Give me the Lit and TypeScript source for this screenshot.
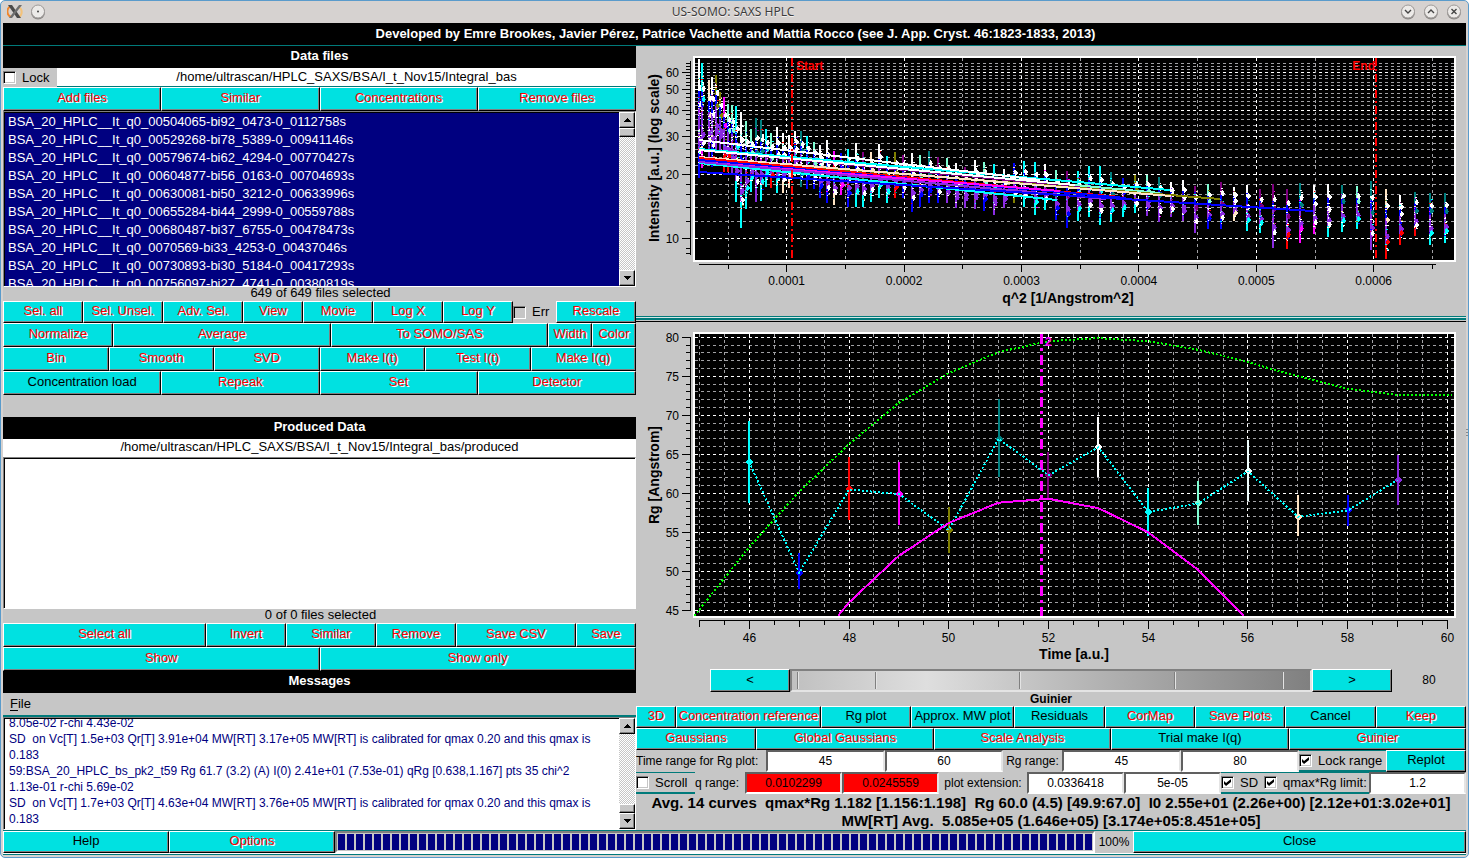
import { LitElement, html, svg, css } from "lit";
import { customElement, property } from "lit/decorators.js";
import { styleMap } from "lit/directives/style-map.js";
import { classMap } from "lit/directives/class-map.js";

type Btn = { label: string; w: number; on?: boolean };

const b = (label: string, w = 1, on = false): Btn => ({ label, w, on });

const palette = [
  "#00ffff", "#0000ff", "#ff0000", "#ff00ff", "#808000", "#008080", "#800080",
  "#ffffff", "#00ffff", "#7fffd4", "#f0ffff", "#ffe4c4", "#0000ff", "#8a2be2",
];

const plotStyles = css`
  :host { display: block; min-height: 0; min-width: 0; }
  svg { display: block; width: 100%; height: 100%; }
  text { font-family: "Liberation Sans", Arial, sans-serif; }
  .tick { font-size: 12px; fill: #000; }
  .title { font-size: 14px; font-weight: bold; fill: #000; }
  .mark { font-size: 12px; font-weight: bold; }
  .frame { fill: #000; stroke: #fff; stroke-width: 2; }
  .axis { stroke: #000; stroke-width: 1; fill: none; }
  .minor { stroke: #a0a0a4; stroke-width: 1; stroke-dasharray: 3 3; }
  .major { stroke: #fff; stroke-width: 1; stroke-dasharray: 3 3; }
`;

/* Error bars of the intensity plot: [channel, top, bottom] in thirds of a unit. */
const bars: number[][] = [
  [0, 28, 384], [1, 40, 355], [3, 90, 325], [4, 82, 350], [5, 75, 300], [6, 125, 300],
  [7, 142, 365], [8, 162, 365], [9, 165, 375], [10, 168, 455], [11, 186, 533], [12, 213, 478],
  [13, 238, 425], [14, 204, 455], [15, 210, 452], [16, 236, 410], [17, 250, 415], [18, 232, 430],
  [19, 250, 430], [20, 255, 415], [21, 243, 378], [22, 243, 410], [23, 258, 416], [24, 275, 416],
  [25, 285, 445], [26, 270, 458], [27, 303, 466], [28, 310, 435], [29, 297, 470], [30, 280, 470],
  [31, 305, 470], [32, 306, 455], [33, 282, 443], [34, 318, 458], [35, 306, 445], [36, 315, 443],
  [37, 310, 485], [38, 315, 470], [39, 303, 458], [40, 322, 458], [41, 323, 458], [42, 338, 475],
  [43, 350, 475], [44, 330, 478], [45, 336, 482], [46, 343, 494], [47, 358, 475], [48, 340, 458],
  [49, 333, 470], [50, 336, 494], [51, 342, 480], [52, 360, 510], [53, 362, 533], [54, 362, 512],
  [55, 348, 502], [56, 348, 524], [57, 366, 517], [58, 384, 500], [59, 376, 488], [60, 375, 497],
  [61, 381, 517], [62, 396, 502], [63, 390, 512], [64, 408, 548], [65, 402, 538], [66, 396, 537],
  [67, 411, 514], [68, 405, 543], [69, 417, 550], [70, 402, 593], [71, 417, 597], [72, 400, 578],
  [73, 405, 553], [74, 402, 562], [75, 405, 545], [76, 408, 538], [77, 393, 600], [78, 417, 627],
  [79, 436, 584], [80, 426, 557], [81, 430, 586], [82, 430, 578],
];

/* Colours of the top and bottom piece of each bar, in the order of the bars. */
const tops = "wcnwoomaacwaattcawwwwtcawwmbcwpnwcopwatpawpwacwbccwapccctboatwwpapwwppptwwtatnwttt".split("");
const feet = "bmvbvvrrvccccvccrcnnntbbbbnmbcccccrbbbbbvvvvbvvocccbbccccccvvvvvbbnccvrmmcccvrrrccbpcc".split("");
const ink: Record<string, string> = {
  w: "#ffffff", c: "#00ffff", b: "#0000ff", o: "#808000", m: "#ff00ff", a: "#7fffd4",
  t: "#008080", p: "#800080", v: "#8a2be2", r: "#ff0000", n: "#ffe4c4",
};

/* Guinier fit lines: x1, y1, x2, y2, colour. */
const fits: [number, number, number, number, string][] = [
  [63, 104, 389, 134, "#008080"], [63, 104, 464, 143, "#800080"], [63, 103, 534, 144, "#00ffff"],
  [63, 104, 524, 147, "#7fffd4"], [63, 94, 404, 134, "#ffffff"], [63, 104, 439, 139, "#ffffff"],
  [63, 112, 584, 153, "#808000"], [63, 111, 535, 150, "#ffe4c4"], [63, 112, 484, 151, "#ff0000"],
  [63, 114, 490, 152, "#0000ff"], [63, 117, 421, 154, "#00ffff"], [63, 116, 424, 145, "#ff00ff"],
  [63, 116, 470, 153, "#8a2be2"], [63, 126, 677, 165, "#0000ff"],
];

@customElement("intensity-plot")
class IntensityPlot extends LitElement {
  static styles = [
    plotStyles,
    css`
      .limit { stroke: #f00; stroke-width: 2; stroke-dasharray: 8 3 2 3; }
      .mark { fill: #f00; }
    `,
  ];

  x(v: number) { return 33.3 + v * 117.4; }
  y(v: number) { return Math.round(192 - 213.3 * Math.log10(v / 10)) + 0.5; }

  renderBar([k, top, bottom]: number[], i: number) {
    const q = 0.00504065 + k * 0.000252035;
    const x = Math.round(this.x(q * q * 10000)) - 1;
    const t = 4 + top / 3;
    const h = (bottom - top) / 3;
    let seed = (i + 3) * 7919;
    const rnd = () => ((seed = (seed * 1103515245 + 12345) % 2147483648) / 2147483648);
    const specks = [];
    const n = Math.round(h / 2.4);
    for (let j = 0; j < n; j++) {
      const sy = Math.round(t + h * 0.1 + rnd() * h * 0.78);
      const col = rnd() < 0.35 ? "#ffffff" : palette[Math.floor(rnd() * palette.length)];
      specks.push(svg`<rect x=${x + 2 - Math.floor(rnd() * 3)} y=${sy} width=${1 + Math.floor(rnd() * 2)} height="1" fill=${col}></rect>`);
    }
    const diamond = (dy: number, c: string) =>
      svg`<path d=${`M${x + 1} ${dy}l1 -3h1l2 3l-2 3h-1z`} fill=${c}></path>`;
    return svg`
      <rect x=${x} y=${t} width="2" height=${h} fill="#8a2be2"></rect>
      <rect x=${x} y=${t + h * 0.25} width="2" height=${h * 0.16} fill="#0000ff"></rect>
      <rect x=${x} y=${t} width="2" height=${h * 0.27} fill=${ink[tops[i] ?? "w"]}></rect>
      <rect x=${x} y=${t + h * 0.78} width="2" height=${h * 0.22} fill=${ink[feet[i] ?? "c"]}></rect>
      ${specks}
      ${diamond(t + h * 0.24, "#ffffff")}
      ${diamond(t + h * (0.34 + rnd() * 0.14), ink[tops[i] ?? "w"])}
      ${diamond(t + h * 0.68, "#8a2be2")}
      ${diamond(t + h * 0.76, rnd() < 0.4 ? "#ffffff" : ink[feet[i] ?? "c"])}
    `;
  }

  render() {
    const rows: number[] = [];
    for (let v = 10; v <= 66; v += 2) rows.push(v);
    const cols = [0.5, 1, 1.5, 2, 2.5, 3, 3.5, 4, 4.5, 5, 5.5, 6, 6.5];
    return html`
      <svg viewBox="0 0 830 270" role="img" aria-label="Intensity against q squared" shape-rendering="crispEdges">
        <rect class="frame" x="58" y="11" width="761" height="204"></rect>
        ${rows.map((v) => svg`<line class=${v % 10 ? "minor" : "major"} x1="59" x2="818" y1=${this.y(v)} y2=${this.y(v)}></line>
          <line class="axis" x1=${v % 10 ? 50 : 46} x2="54" y1=${this.y(v)} y2=${this.y(v)}></line>`)}
        ${[8.5, 9].map((v) => svg`<line class="axis" x1="50" x2="54" y1=${this.y(v)} y2=${this.y(v)}></line>`)}
        ${cols.map((v) => {
          const x = Math.floor(this.x(v)) + 0.5;
          const whole = Number.isInteger(v);
          return svg`<line class=${whole ? "major" : "minor"} x1=${x} x2=${x} y1="12" y2="214"></line>
            <line class="axis" x1=${x} x2=${x} y1="218" y2=${whole ? 226 : 223}></line>`;
        })}
        <path class="axis" d="M54.5 15V209M63 218.5H800"></path>
        ${[10, 20, 30, 40, 50, 60].map((v) => svg`<text class="tick" x="43" y=${this.y(v) + 4} text-anchor="end">${v}</text>`)}
        ${[1, 2, 3, 4, 5, 6].map((v) => svg`<text class="tick" x=${this.x(v)} y="239" text-anchor="middle">0.000${v}</text>`)}
        ${bars.map((d, i) => this.renderBar(d, i))}
        ${fits.map(([x1, y1, x2, y2, c]) => svg`<line x1=${x1} y1=${y1} x2=${x2} y2=${y2} stroke=${c} stroke-width="2"></line>`)}
        <line class="limit" x1="156" x2="156" y1="12" y2="214"></line>
        <line class="limit" x1="740" x2="740" y1="12" y2="214"></line>
        <text class="mark" x="160" y="24">Start</text>
        <text class="mark" x="739" y="24" text-anchor="end">End</text>
        <text class="title" x="432" y="257" text-anchor="middle">q^2 [1/Angstrom^2]</text>
        <text class="title" transform="translate(23 112) rotate(-90)" text-anchor="middle">Intensity [a.u.] (log scale)</text>
      </svg>
    `;
  }
}

const rg: [number, number, number, number][] = [
  [46, 64.0, 58.7, 69.3], [47, 49.8, 47.7, 52.3], [48, 60.5, 56.6, 64.7], [49, 59.9, 55.9, 64.0],
  [50, 55.3, 52.4, 58.3], [51, 67.0, 62.1, 72.1], [52, 62.3, 59.3, 65.3], [53, 65.9, 62.1, 69.8],
  [54, 57.6, 54.5, 60.7], [55, 58.7, 55.9, 61.6], [56, 62.8, 59.0, 66.8], [57, 57.0, 54.5, 59.8],
  [58, 57.8, 55.8, 59.8], [59, 61.7, 58.5, 64.9],
];
const total = [
  [44.9, 44.3], [46, 53.1], [47, 60.2], [48, 66.3], [49, 71.6], [50, 75.4], [51, 78.1], [52, 79.5],
  [53, 79.9], [54, 79.5], [55, 78.4], [56, 76.8], [57, 75], [58, 73.4], [59, 72.6], [60.1, 72.6],
];
const peak = [
  [47.78, 44.3], [48, 46], [49, 52], [50, 56.2], [51, 58.8], [52, 59.3], [53, 58.1], [54, 55],
  [55, 50.2], [55.92, 44.3],
];

@customElement("rg-plot")
class RgPlot extends LitElement {
  static styles = [
    plotStyles,
    css`
      .total { fill: none; stroke: #0f0; stroke-width: 2; stroke-dasharray: 2 2; }
      .peak { fill: none; stroke: #f0f; stroke-width: 2; }
      .rg { fill: none; stroke: #0ff; stroke-width: 2; stroke-dasharray: 2 2; }
      .cursor { stroke: #f0f; stroke-width: 3; stroke-dasharray: 10 4 3 4; }
      .mark { fill: #f0f; }
    `,
  ];

  x(t: number) { return 63.4 + (t - 45) * 49.87; }
  y(v: number) { return 15.3 + (80 - v) * 7.8; }

  line(p: number[][]) {
    return p.map(([t, v]) => `${this.x(t)},${this.y(v)}`).join(" ");
  }

  render() {
    const rows = Array.from({ length: 36 }, (_, i) => 45 + i);
    const cols = Array.from({ length: 31 }, (_, i) => 45 + i / 2);
    return html`
      <svg viewBox="0 0 830 342" role="img" aria-label="Rg against time" shape-rendering="crispEdges">
        <rect class="frame" x="58" y="11" width="761" height="284"></rect>
        ${rows.map((v) => {
          const y = Math.floor(this.y(v)) + 0.5;
          const five = v % 5 === 0;
          return svg`<line class=${five ? "major" : "minor"} x1="59" x2="818" y1=${y} y2=${y}></line>
            <line class="axis" x1=${five ? 46 : 50} x2="54" y1=${y} y2=${y}></line>
            ${five ? svg`<text class="tick" x="43" y=${y + 4} text-anchor="end">${v}</text>` : ""}`;
        })}
        ${cols.map((t) => {
          const x = Math.floor(this.x(t)) + 0.5;
          const even = t % 2 === 0;
          return svg`<line class=${even ? "major" : "minor"} x1=${x} x2=${x} y1="12" y2="294"></line>
            <line class="axis" x1=${x} x2=${x} y1="298" y2=${even ? 307 : Number.isInteger(t) ? 305 : 303}></line>
            ${even ? svg`<text class="tick" x=${x} y="320" text-anchor="middle">${t}</text>` : ""}`;
        })}
        <path class="axis" d="M54.5 15V289M63 298.5H812"></path>
        <polyline class="total" points=${this.line(total)}></polyline>
        <line class="cursor" x1="405" x2="405" y1="12" y2="294"></line>
        ${rg.map(([t, v, lo, hi], i) => {
          const x = Math.round(this.x(t));
          const y = Math.round(this.y(v));
          return svg`<rect x=${x - 1} y=${this.y(hi)} width="2" height=${this.y(lo) - this.y(hi)} fill=${palette[i]}></rect>
            <path d=${`M${x - 4} ${y}l4 -4l4 4l-4 4z`} fill=${palette[i]}></path>`;
        })}
        <polyline class="rg" points=${this.line(rg)}></polyline>
        <polyline class="peak" points=${this.line(peak)}></polyline>
        <text class="mark" x="409" y="24">2</text>
        <text class="title" x="438" y="337" text-anchor="middle">Time [a.u.]</text>
        <text class="title" transform="translate(23 153) rotate(-90)" text-anchor="middle">Rg [Angstrom]</text>
      </svg>
    `;
  }
}

@customElement("scroll-strip")
class ScrollStrip extends LitElement {
  @property({ type: Boolean }) end = false;
  static styles = css`
    :host {
      display: flex; flex-direction: column; width: 16px; flex: none;
      background: repeating-conic-gradient(#fff 0 25%, #c6c6c6 0 50%) 0 0 / 2px 2px;
    }
    .arrow, .thumb {
      box-sizing: border-box; background: #c6c6c6; border: 1px solid; padding: 0;
      border-color: #fff #000 #000 #fff; box-shadow: inset -1px -1px #808080; flex: none;
    }
    .arrow { height: 16px; width: 16px; display: grid; place-items: center; }
    .thumb { height: 9px; }
    .space { flex: 1; }
    svg { display: block; }
  `;
  render() {
    const arrow = (d: string, name: string) => html`
      <button class="arrow" aria-label=${name}>
        <svg width="7" height="4" viewBox="0 0 7 4" shape-rendering="crispEdges"><path d=${d}></path></svg>
      </button>`;
    const thumb = html`<div class="thumb"></div>`;
    return html`
      ${arrow("M0 4L3 0h1L7 4z", "Scroll up")}
      ${this.end ? "" : thumb}
      <div class="space"></div>
      ${this.end ? thumb : ""}
      ${arrow("M0 0L3 4h1L7 0z", "Scroll down")}
    `;
  }
}

const files = [
  "BSA_20_HPLC__It_q0_00504065-bi92_0473-0_0112758s",
  "BSA_20_HPLC__It_q0_00529268-bi78_5389-0_00941146s",
  "BSA_20_HPLC__It_q0_00579674-bi62_4294-0_00770427s",
  "BSA_20_HPLC__It_q0_00604877-bi56_0163-0_00704693s",
  "BSA_20_HPLC__It_q0_00630081-bi50_3212-0_00633996s",
  "BSA_20_HPLC__It_q0_00655284-bi44_2999-0_00559788s",
  "BSA_20_HPLC__It_q0_00680487-bi37_6755-0_00478473s",
  "BSA_20_HPLC__It_q0_0070569-bi33_4253-0_00437046s",
  "BSA_20_HPLC__It_q0_00730893-bi30_5184-0_00417293s",
  "BSA_20_HPLC__It_q0_00756097-bi27_4741-0_00380819s",
];

const messages = [
  "8.05e-02 r-chi 4.43e-02",
  "SD  on Vc[T] 1.5e+03 Qr[T] 3.91e+04 MW[RT] 3.17e+05 MW[RT] is calibrated for qmax 0.20 and this qmax is",
  "0.183",
  "59:BSA_20_HPLC_bs_pk2_t59 Rg 61.7 (3.2) (A) I(0) 2.41e+01 (7.53e-01) qRg [0.638,1.167] pts 35 chi^2",
  "1.13e-01 r-chi 5.69e-02",
  "SD  on Vc[T] 1.7e+03 Qr[T] 4.63e+04 MW[RT] 3.76e+05 MW[RT] is calibrated for qmax 0.20 and this qmax is",
  "0.183",
];

@customElement("app-root")
class AppRoot extends LitElement {
  static styles = css`
    :host {
      display: block; height: 100vh; min-height: 700px; background: #fff;
      font: 13px/16px "Liberation Sans", Arial, sans-serif; color: #000;
    }
    * { box-sizing: border-box; }
    button, input { font: inherit; color: inherit; border-radius: 0; margin: 0; }
    .window {
      height: 100%; display: flex; flex-direction: column; background: #d6d2d0;
      border: 1px solid #5a9bcb; border-radius: 5px; padding: 0 2px 2px; position: relative;
    }
    .titlebar { height: 22px; flex: none; display: flex; align-items: center; gap: 7px; padding: 0 4px; }
    .titlebar h1 {
      flex: 1; text-align: center; font: 12px/20px "Noto Sans", "Open Sans", sans-serif;
      color: #3c3c3c; margin: 0; text-shadow: 0 1px #f4f2f0; padding-left: 20px;
    }
    .round { width: 16px; height: 16px; border: 0; padding: 0; background: none; }
    .round svg { display: block; }
    .logo { display: block; }
    .body { flex: 1; min-height: 0; display: flex; flex-direction: column; background: #c6c6c6; border-bottom: 1px solid #007a7a; }
    .banner {
      background: #000; color: #fff; font-weight: bold; text-align: center;
      height: 22px; line-height: 20px; flex: none;
    }
    .banner.main { height: 23px; line-height: 22px; border-bottom: 1px solid #007a7a; padding-left: 2px; }
    .columns { flex: 1; min-height: 0; display: grid; grid-template-columns: minmax(0, 633fr) minmax(0, 830fr); }
    .left, .right { display: flex; flex-direction: column; min-height: 0; min-width: 0; }
    .row { display: grid; flex: none; height: 24px; }
    .row.low { height: 22px; }
    .btn {
      background: #00e1e1; border: 1px solid; border-color: #fff #000 #000 #fff;
      box-shadow: inset -1px -1px #808080; padding: 0 0 2px; min-width: 0; white-space: nowrap;
      overflow: hidden; color: #000; line-height: 16px; display: flex; align-items: center; justify-content: center;
    }
    .btn:disabled { color: #f00; text-shadow: 1px 1px #fff; }
    .path { display: flex; height: 19px; flex: none; background: #fff; }
    .path .text { flex: 1; text-align: center; line-height: 18px; border-bottom: 1px solid #007a7a; }
    .path.plain { height: 18px; }
    .path.plain .text { border: 0; line-height: 16px; }
    .check { display: flex; align-items: center; gap: 6px; white-space: nowrap; min-width: 0; background: #c6c6c6; }
    .path .check { width: 54px; }
    .check.lined { border: solid #007a7a; border-width: 1px 0 2px; }
    .check input {
      appearance: none; width: 13px; height: 13px; flex: none; background: #fff; border: 1px solid;
      border-color: #808080 #fff #fff #808080; box-shadow: inset 1px 1px #000, inset -1px -1px #c6c6c6;
      display: grid; place-items: center;
    }
    .check.err input { background: #c6c6c6; }
    .check input:checked::before {
      content: ""; width: 7px; height: 7px; background: #000;
      clip-path: polygon(0 29%, 29% 57%, 100% 0, 100% 43%, 29% 100%, 0 71%);
    }
    .box {
      display: flex; border: 1px solid; border-color: #808080 #fff #fff #808080; min-height: 0;
      background: #fff; padding: 0; overflow: hidden;
    }
    .inner { flex: 1; min-width: 0; overflow: hidden; border: solid #000; border-width: 1px 0 0 1px; }
    .files { flex: 176 1 0; }
    .files .inner { background: #000080; color: #fff; }
    .files ul { list-style: none; margin: 0; padding: 0 0 0 3px; }
    .files li { height: 18px; line-height: 18px; white-space: nowrap; }
    .produced { flex: 152 1 0; }
    .log { flex: 112 1 0; }
    .log .inner { display: flex; flex-direction: column; justify-content: flex-end; padding: 0 4px 2px; }
    .log p { margin: 0; font-size: 12px; line-height: 16px; color: #000080; white-space: pre; }
    .count { height: 14px; line-height: 12px; text-align: center; flex: none; padding-left: 2px; }
    .spacer { height: 22px; flex: none; }
    .menubar { height: 24px; flex: none; border-bottom: 2px solid #007a7a; display: flex; align-items: center; padding-left: 7px; }
    .menu { background: none; border: 0; padding: 0; }
    .menu u { text-underline-offset: 2px; }
    .split { height: 6px; flex: none; background: linear-gradient(#007a7a 0 1px, #d6e6e6 1px 2px, #007a7a 2px 4px, #c6c6c6 4px 5px, #000 5px); }
    intensity-plot { flex: 270 1 0; }
    rg-plot { flex: 342 1 0; }
    .wheelrow { display: flex; flex: none; height: 28px; padding: 5px 0 0 74px; }
    .wheelrow .btn { width: 80px; }
    .wheelrow output { width: 74px; text-align: center; line-height: 22px; font-size: 12px; }
    .wheel {
      appearance: none; flex: 1; min-width: 0; height: 23px; border: 2px solid; border-color: #808080 #e4e4e4 #e4e4e4 #808080;
      background:
        linear-gradient(90deg, #808080 50%, #e4e4e4 0) 1% 50% / 2px 17px no-repeat,
        linear-gradient(90deg, #808080 50%, #e4e4e4 0) 16% 50% / 2px 17px no-repeat,
        linear-gradient(90deg, #808080 50%, #e4e4e4 0) 44% 50% / 2px 17px no-repeat,
        linear-gradient(90deg, #808080 50%, #e4e4e4 0) 74% 50% / 2px 17px no-repeat,
        linear-gradient(90deg, #808080 50%, #e4e4e4 0) 95% 50% / 2px 17px no-repeat,
        linear-gradient(90deg, #c0c0c0, #dedede 26%, #b4b4b4 58%, #808080);
    }
    .wheel::-webkit-slider-thumb { appearance: none; width: 1px; height: 1px; }
    .caption { height: 14px; line-height: 14px; flex: none; text-align: center; font-size: 12px; font-weight: bold; }
    .label { display: flex; align-items: center; white-space: nowrap; min-width: 0; font-size: 12px; }
    .label.mid { justify-content: center; }
    .field {
      border: 2px solid; border-color: #606060 #e4e4e4 #fff #606060; background: #fff; text-align: center;
      width: 100%; min-width: 0; padding: 0; font-size: 12px;
    }
    .field.bad { background: #f00; }
    .stats { font-weight: bold; font-size: 15px; line-height: 18px; text-align: center; white-space: pre; flex: none; }
    .footer { flex: none; display: grid; height: 24px; border-top: 1px solid #007a7a; border-bottom: 1px solid #fff; grid-template-columns: 166fr 166fr 760fr 38fr 333fr; }
    .progress { appearance: none; width: 100%; height: 100%; border: 2px solid; border-color: #808080 #fff #fff #808080; background: #c6c6c6; padding: 1px; }
    .progress::-webkit-progress-bar { background: #c6c6c6; }
    .progress::-webkit-progress-value { background: repeating-linear-gradient(90deg, #000080 0 7px, #c6c6c6 7px 9px); }
    .grip { position: absolute; right: 0; top: 50%; width: 2px; height: 8px; background: repeating-linear-gradient(#888 0 1px, transparent 1px 3px); }
  `;

  row(items: Btn[], low = false) {
    return html`<div class=${classMap({ row: true, low })} style=${styleMap({ gridTemplateColumns: items.map((i) => `${i.w}fr`).join(" ") })}>
      ${items.map((i) => this.btn(i))}
    </div>`;
  }

  btn(i: Btn) {
    return html`<button class="btn" ?disabled=${!i.on}>${i.label}</button>`;
  }

  cols(...w: number[]) {
    return styleMap({ gridTemplateColumns: w.map((n) => `minmax(0, ${n}fr)`).join(" ") });
  }

  round(path: unknown, name: string) {
    return html`<button class="round" aria-label=${name}>
      <svg width="16" height="16" viewBox="0 0 16 16">
        <circle cx="8" cy="8.5" r="7" fill="#8d8a88"></circle>
        <circle cx="8" cy="7.5" r="6.5" fill="#eceae8" stroke="#a09c9a"></circle>
        ${path}
      </svg>
    </button>`;
  }

  glyph(d: string) {
    return svg`<path d=${d} fill="none" stroke="#444" stroke-width="1.4"></path>`;
  }

  render() {
    return html`
      <div class="window">
        <header class="titlebar">
          <svg class="logo" width="16" height="16" viewBox="0 0 16 16">
            <path d="M4 2a6 6 0 0 0 0 11" fill="none" stroke="#f0862c" stroke-width="2"></path>
            <path d="M12 3a6 6 0 0 1 0 10" fill="none" stroke="#f3c27a" stroke-width="2"></path>
            <path d="M1 1h4l9 13h-4z" fill="#4a4a4a"></path>
            <path d="M12 1h3L5 14H2z" fill="#6e6e6e"></path>
          </svg>
          ${this.round(svg`<circle cx="8" cy="7.5" r="1" fill="#444"></circle>`, "Window menu")}
          <h1>US-SOMO: SAXS HPLC</h1>
          ${this.round(this.glyph("M5 6l3 3l3-3"), "Minimize")}
          ${this.round(this.glyph("M5 9l3-3l3 3"), "Maximize")}
          ${this.round(this.glyph("M5.500 5l5 5M10.500 5l-5 5"), "Close window")}
        </header>
        <main class="body">
          <div class="banner main">Developed by Emre Brookes, Javier Pérez, Patrice Vachette and Mattia Rocco (see J. App. Cryst. 46:1823-1833, 2013)</div>
          <div class="columns">
            <section class="left">
              <div class="banner">Data files</div>
              <div class="path">
                <label class="check"><input type="checkbox" />Lock</label>
                <span class="text">/home/ultrascan/HPLC_SAXS/BSA/I_t_Nov15/Integral_bas</span>
              </div>
              ${this.row([b("Add files"), b("Similar"), b("Concentrations"), b("Remove files")])}
              <div class="box files">
                <div class="inner"><ul>${files.map((f) => html`<li>${f}</li>`)}</ul></div>
                <scroll-strip></scroll-strip>
              </div>
              <div class="count">649 of 649 files selected</div>
              <div class="row low" style=${this.cols(80, 80, 80, 60, 70, 70, 70, 43, 80)}>
                ${["Sel. all", "Sel. Unsel.", "Adv. Sel.", "View", "Movie", "Log X", "Log Y"].map((l) => this.btn(b(l)))}
                <label class="check err"><input type="checkbox" />Err</label>
                ${this.btn(b("Rescale"))}
              </div>
              ${this.row([b("Normalize", 110), b("Average", 218), b("To SOMO/SAS", 217), b("Width", 44), b("Color", 44)])}
              ${this.row([b("Bin"), b("Smooth"), b("SVD"), b("Make I(t)"), b("Test I(t)"), b("Make I(q)")])}
              ${this.row([b("Concentration load", 1, true), b("Repeak"), b("Set"), b("Detector")])}
              <div class="spacer"></div>
              <div class="banner">Produced Data</div>
              <div class="path plain"><span class="text">/home/ultrascan/HPLC_SAXS/BSA/I_t_Nov15/Integral_bas/produced</span></div>
              <div class="box produced"><div class="inner"></div></div>
              <div class="count">0 of 0 files selected</div>
              ${this.row([b("Select all", 203), b("Invert", 80), b("Similar", 90), b("Remove", 80), b("Save CSV", 120), b("Save", 60)])}
              ${this.row([b("Show"), b("Show only")])}
              <div class="banner">Messages</div>
              <nav class="menubar"><button class="menu"><u>F</u>ile</button></nav>
              <div class="box log">
                <div class="inner" role="log">${messages.map((m) => html`<p>${m}</p>`)}</div>
                <scroll-strip end></scroll-strip>
              </div>
            </section>
            <section class="right">
              <intensity-plot></intensity-plot>
              <div class="split"></div>
              <rg-plot></rg-plot>
              <div class="wheelrow">
                <button class="btn">&lt;</button>
                <input class="wheel" type="range" aria-label="Curve" />
                <button class="btn">&gt;</button>
                <output>80</output>
              </div>
              <div class="caption">Guinier</div>
              ${this.row([b("3D", 40), b("Concentration reference", 145), b("Rg plot", 90, true), b("Approx. MW plot", 103, true), b("Residuals", 91, true), b("CorMap", 90), b("Save Plots", 90), b("Cancel", 91, true), b("Keep", 90)], true)}
              ${this.row([b("Gaussians", 120), b("Global Gaussians", 178), b("Scale Analysis", 177), b("Trial make I(q)", 178, true), b("Guinier", 177)], true)}
              <div class="row low" style=${this.cols(130, 119, 118, 59, 119, 118, 87, 80)}>
                <label class="label" for="t0">Time range for Rg plot:</label>
                <input class="field" id="t0" .value=${"45"} />
                <input class="field" aria-label="Time range end" .value=${"60"} />
                <label class="label mid" for="r0">Rg range:</label>
                <input class="field" id="r0" .value=${"45"} />
                <input class="field" aria-label="Rg range end" .value=${"80"} />
                <label class="check lined"><input type="checkbox" checked />Lock range</label>
                <button class="btn">Replot</button>
              </div>
              <div class="row low" style=${this.cols(59, 50, 97, 97, 88, 97, 97, 43, 105, 97)}>
                <label class="check lined"><input type="checkbox" />Scroll</label>
                <label class="label" for="q0">q range:</label>
                <input class="field bad" id="q0" .value=${"0.0102299"} />
                <input class="field bad" aria-label="q range end" .value=${"0.0245559"} />
                <label class="label mid" for="e0">plot extension:</label>
                <input class="field" id="e0" .value=${"0.0336418"} />
                <input class="field" aria-label="Plot extension step" .value=${"5e-05"} />
                <label class="check lined"><input type="checkbox" checked />SD</label>
                <label class="check lined"><input type="checkbox" checked />qmax*Rg limit:</label>
                <input class="field" aria-label="qmax*Rg limit value" .value=${"1.2"} />
              </div>
              <div class="stats">Avg. 14 curves  qmax*Rg 1.182 [1.156:1.198]  Rg 60.0 (4.5) [49.9:67.0]  I0 2.55e+01 (2.26e+00) [2.12e+01:3.02e+01]
MW[RT] Avg.  5.085e+05 (1.646e+05) [3.174e+05:8.451e+05]</div>
            </section>
          </div>
          <footer class="footer">
            <button class="btn">Help</button>
            <button class="btn" disabled>Options</button>
            <progress class="progress" max="100" value="100" aria-label="Progress"></progress>
            <span class="label mid">100%</span>
            <button class="btn">Close</button>
          </footer>
        </main>
        <div class="grip"></div>
      </div>
    `;
  }
}
